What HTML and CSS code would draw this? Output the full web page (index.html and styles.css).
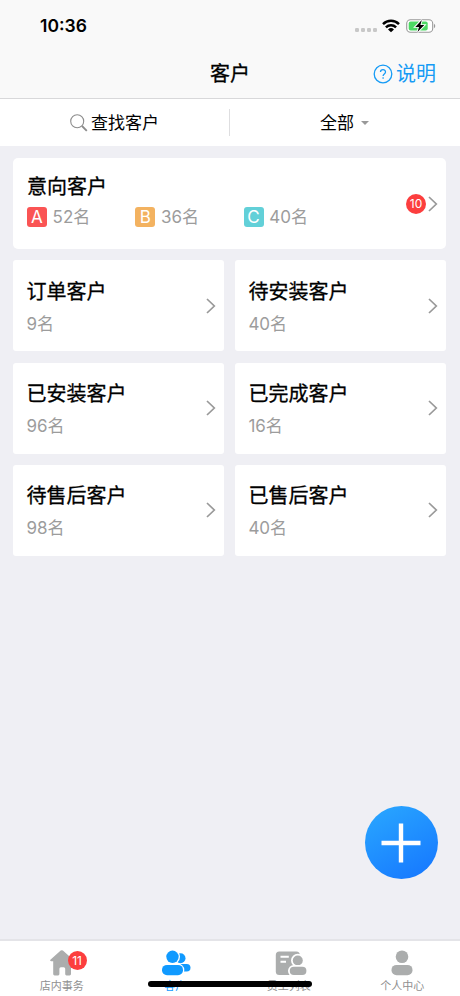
FILE: index.html
```html
<!DOCTYPE html>
<html lang="zh-CN">
<head>
<meta charset="utf-8">
<title>客户</title>
<link rel="stylesheet" href="styles.css">
</head>
<body>
<div class="app">
  <header class="header">
    <div class="status">
      <span class="time">10:36</span>
      <div class="status-icons">
        <div class="dots"><i></i><i></i><i></i><i></i></div>
        <svg class="wifi" width="18" height="14" viewBox="0 0 18 14"><g fill="none" stroke="#000" stroke-width="2.5"><path d="M1 5.1a11.5 11.5 0 0 1 16 0"/><path d="M3.9 8.3a7.4 7.4 0 0 1 10.2 0"/></g><path d="M9 13.3 6 10.5a4.4 4.4 0 0 1 6 0z"/></svg>
        <svg class="battery" width="30" height="16" viewBox="0 0 30 16"><rect x=".7" y="1.7" width="26" height="12.6" rx="3.8" fill="#fff" stroke="#999" stroke-width="1.1"/><rect x="2.7" y="3.5" width="19" height="9" rx="2" fill="#4cd964"/><path d="M28 5.8c1.7.8 1.7 3.6 0 4.4z" fill="#999"/><path d="M15.800 2 9.300 8.900h3.700L11.500 14 18.300 7.100h-3.900z" fill="#000" stroke="#fff" stroke-width="1.900" paint-order="stroke"/></svg>
      </div>
    </div>
    <div class="nav">
      <h1 class="nav-title">客户</h1>
      <div class="help">
        <svg width="20" height="20" viewBox="0 0 20 20" fill="none" stroke="#169bf5" stroke-width="1.3"><circle cx="10" cy="10" r="8.8"/><path d="M7.5 8.1c0-3.3 5-3.3 5-.2 0 2-2.4 2-2.4 4"/><path d="M10.1 13.2v1.5"/></svg>
        <span>说明</span>
      </div>
    </div>
  </header>
  <div class="filters">
    <div class="filter">
      <svg width="18" height="18" viewBox="0 0 18 18" fill="none" stroke="#8c8c8c"><circle cx="7.2" cy="7.2" r="6.5" stroke-width="1.1"/><path d="m12 12 4.8 4.8" stroke-width="1.8"/></svg>
      <span>查找客户</span>
    </div>
    <div class="filter filter-all">
      <span>全部</span><i class="caret"></i>
    </div>
  </div>
  <main class="cards">
    <section class="card wide">
      <div>
        <h2>意向客户</h2>
        <div class="levels">
          <div class="level"><b class="tag a">A</b><span>52名</span></div>
          <div class="level"><b class="tag b">B</b><span>36名</span></div>
          <div class="level"><b class="tag c">C</b><span>40名</span></div>
        </div>
      </div>
      <div class="more"><span class="badge">10</span><svg class="chev" viewBox="0 0 10 16"><path d="m1 1 7.3 7L1 15"/></svg></div>
    </section>
    <section class="card"><div><h2>订单客户</h2><p>9名</p></div><svg class="chev" viewBox="0 0 10 16"><path d="m1 1 7.3 7L1 15"/></svg></section>
    <section class="card"><div><h2>待安装客户</h2><p>40名</p></div><svg class="chev" viewBox="0 0 10 16"><path d="m1 1 7.3 7L1 15"/></svg></section>
    <section class="card"><div><h2>已安装客户</h2><p>96名</p></div><svg class="chev" viewBox="0 0 10 16"><path d="m1 1 7.3 7L1 15"/></svg></section>
    <section class="card"><div><h2>已完成客户</h2><p>16名</p></div><svg class="chev" viewBox="0 0 10 16"><path d="m1 1 7.3 7L1 15"/></svg></section>
    <section class="card"><div><h2>待售后客户</h2><p>98名</p></div><svg class="chev" viewBox="0 0 10 16"><path d="m1 1 7.3 7L1 15"/></svg></section>
    <section class="card"><div><h2>已售后客户</h2><p>40名</p></div><svg class="chev" viewBox="0 0 10 16"><path d="m1 1 7.3 7L1 15"/></svg></section>
  </main>
  <button class="add" aria-label="添加"><svg width="40" height="40" viewBox="0 0 40 40"><path d="M20 .5v39M.5 20h39" stroke="#fff" stroke-width="4.4"/></svg></button>
  <nav class="tabs">
    <div class="tab">
      <svg width="32" height="28" viewBox="0 0 32 28" fill="#abadad"><path d="M14.7 1.6q1.1-.9 2.2 0l10.3 9.2q1 1.4-.8 1.5H25V25q0 1.4-1.4 1.4h-3.1q-1.3 0-1.3-1.3v-5.4q0-1.5-1.500-1.500h-2.800q-1.500 0-1.500 1.500v5.400q0 1.300-1.300 1.300H8.600Q7.200 26.400 7.200 25V12.300H5.200q-1.800-.1-.8-1.500z"/></svg>
      <span>店内事务</span>
      <em class="badge tab-badge">11</em>
    </div>
    <div class="tab active">
      <svg width="32" height="28" viewBox="-1 0 32 28" fill="#109aff"><circle cx="20.500" cy="9.300" r="5"/><rect x="15" y="15" width="15.500" height="7.600" rx="3.800"/><g stroke="#fff" stroke-width="2.600" paint-order="stroke"><circle cx="12.500" cy="7.800" r="6.200"/><rect x="2" y="15.900" width="21" height="10.300" rx="5"/></g></svg>
      <span>客户</span>
    </div>
    <div class="tab">
      <svg class="staff" width="34" height="28" viewBox="0 0 34 28" fill="#abadad"><rect x="1.800" y="2.600" width="24" height="23.400" rx="3.500"/><path d="M6.500 7.700h8.300M6.500 12.800h5.500" stroke="#fff" stroke-width="2"/><g stroke="#fff" stroke-width="3.600" paint-order="stroke"><circle cx="23.800" cy="11.500" r="5"/><rect x="15.800" y="17.800" width="16.600" height="8.300" rx="4"/></g></svg>
      <span>员工列表</span>
    </div>
    <div class="tab">
      <svg width="32" height="28" viewBox="0 0 32 28" fill="#abadad"><circle cx="16" cy="7.700" r="6.300"/><rect x="5.500" y="15.900" width="21" height="10.400" rx="5"/></svg>
      <span>个人中心</span>
    </div>
    <div class="home-bar"></div>
  </nav>
</div>
</body>
</html>
```
FILE: styles.css
```css
* { box-sizing: border-box; margin: 0; padding: 0; }
body { background: #efeff4; color: #000; font-family: Inter, "Noto Sans CJK SC", sans-serif; }
.app { position: relative; width: 460px; height: 996px; display: flex; flex-direction: column; overflow: hidden; }
svg { display: block; flex: none; }
.header { height: 99px; background: #f9f9f9; border-bottom: 1px solid #d8d8da; }
.status { height: 49px; padding: 2px 24px 0 40px; display: flex; align-items: center; justify-content: space-between; }
.time { font-size: 17.5px; font-weight: 600; }
.status-icons { display: flex; align-items: center; }
.dots { display: flex; gap: 2px; margin: 9px 5px 0 0; }
.dots i { width: 4px; height: 4px; border-radius: 1.3px; background: #c8c8c8; }
.wifi { margin-right: 6px; }
.nav { height: 49px; display: grid; grid-template-columns: 1fr auto 1fr; align-items: center; }
.nav-title { grid-column: 2; font-size: 20px; line-height: 28px; font-weight: 400; -webkit-text-stroke: .3px; }
.help { display: flex; align-items: center; justify-content: flex-end; gap: 3px; padding-right: 24px; color: #169bf5; font-size: 20px; line-height: 28px; }
.filters { display: grid; grid-template-columns: 230px 230px; align-items: center; height: 47px; background: #fff; }
.filter { display: flex; align-items: center; justify-content: center; height: 27px; font-size: 17px; line-height: 27px; gap: 3px; }
.filter span { padding-top: 1px; }
.filter:first-child { border-right: 1px solid #dedee0; }
.filter-all { gap: 7px; padding-right: 1px; }
.caret { border: 4.5px solid transparent; border-top-color: #999; border-bottom: 0; }
.cards { display: grid; grid-template-columns: 211px 211px; grid-auto-rows: 91px; column-gap: 11px; row-gap: 11.3px; padding: 12px 13.4px 0; }
.card { display: flex; justify-content: space-between; background: #fff; border-radius: 3px; padding: 17.3px 8.4px 0 13px; }
.wide { grid-column: 1 / 3; padding-top: 15px; padding-left: 13.6px; border-radius: 5px; }
h2 { font-size: 20px; line-height: 28px; font-weight: 400; -webkit-text-stroke: .3px; }
.card p { margin-top: 6px; }
.card p, .level { font-size: 17px; line-height: 25px; color: #9c9c9c; }
.levels { display: flex; margin-top: 3px; }
.level { display: flex; align-items: center; width: 108.3px; height: 26px; gap: 5.6px; }
.level span { padding-top: 1px; }
.tag { width: 20px; height: 20px; border-radius: 3px; color: #fff; font-size: 17px; font-weight: 400; line-height: 20px; text-align: center; }
.a { background: #fa5454; }
.b { background: #f3b260; }
.c { background: #62d0d8; }
.chev { width: 10px; height: 16px; margin-top: 20px; fill: none; stroke: #999; stroke-width: 1.7; }
.more { display: flex; align-items: flex-start; gap: 2px; padding-top: 2.5px; }
.badge { width: 20px; height: 20px; border-radius: 50%; background: #fc3e3e; color: #fff; font-size: 12px; font-style: normal; line-height: 20px; text-align: center; }
.more .badge { margin-top: 18px; }
.add { position: absolute; left: 364.5px; top: 806px; width: 73px; height: 73px; border: 0; border-radius: 50%; background: linear-gradient(150deg, #29a6ff 5%, #177aff 90%); display: grid; place-items: center; }
.tabs { position: relative; display: flex; margin-top: auto; height: 57px; padding: 0 1px 0 5px; background: #fff; border-top: 2px solid #e4e4e8; }
.tab { position: relative; flex: 1; display: flex; flex-direction: column; align-items: center; padding-top: 8px; font-size: 11px; line-height: 16px; color: #909090; }
.tab span { margin-top: 1.4px; }
.staff { margin-left: 4px; }
.tab.active { color: #109aff; }
.tab-badge { position: absolute; left: 62.6px; top: 10px; width: 19px; height: 19px; line-height: 19px; }
.home-bar { position: absolute; left: 148px; top: 40px; width: 164px; height: 6px; border-radius: 3px; background: #000; }
```
